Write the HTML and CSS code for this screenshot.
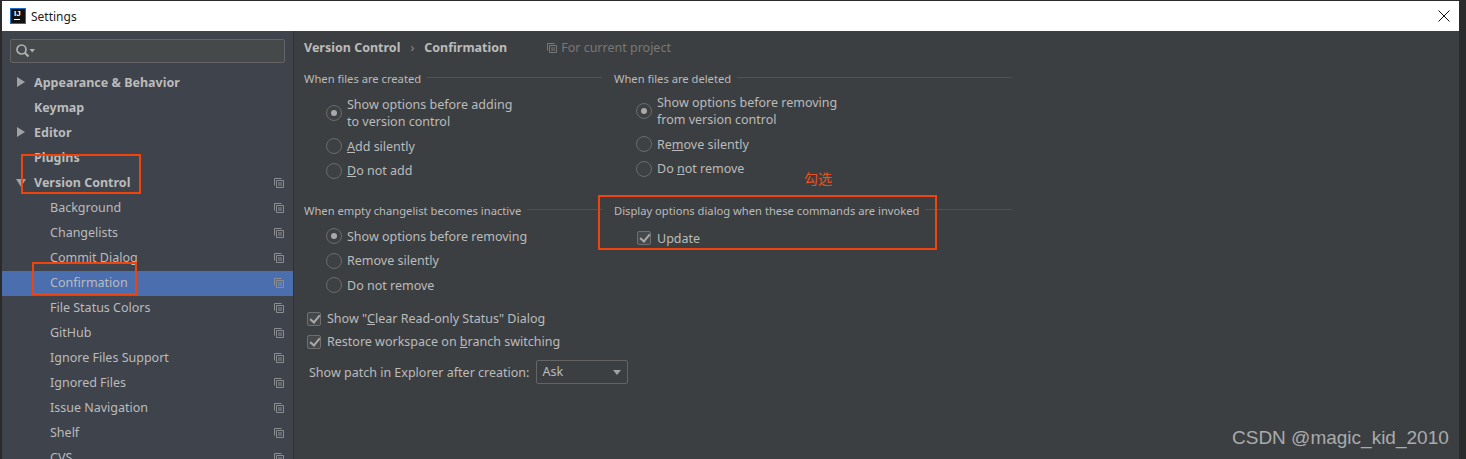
FILE: index.html
```html
<!DOCTYPE html>
<html lang="en">
<head>
    <meta charset="UTF-8">
    <meta name="viewport" content="width=device-width, initial-scale=1.0">
    <title>Settings</title>
    <link rel="stylesheet" href="styles.css">
</head>
<body>

<svg class="defs" width="0" height="0">
    <symbol id="copy" viewBox="0 0 10 10">
        <path d="M0.5 7.5V0.5H7.5M2.5 2.5H9.5V9.5H2.5ZM4 5H8M4 7H8" fill="none" stroke="currentColor"/>
    </symbol>
</svg>

<div class="window">

    <!-- Title bar -->
    <div class="titlebar">
        <div class="logo"><span>IJ</span><i></i></div>
        <span class="title">Settings</span>
        <svg class="close" width="12" height="12" viewBox="0 0 12 12">
            <path d="M0.5 0.5L11.5 11.5M11.5 0.5L0.5 11.5" stroke="#111" fill="none"/>
        </svg>
    </div>

    <div class="main">

        <!-- Left tree -->
        <div class="sidebar">
            <div class="search">
                <svg width="20" height="15" viewBox="0 0 20 15">
                    <circle cx="5.5" cy="5.5" r="4.5" fill="none" stroke="#afb1b3" stroke-width="1.7"/>
                    <path d="M8.8 8.8L12.5 12.5" stroke="#afb1b3" stroke-width="2.2"/>
                    <path d="M13.5 5H19L16.2 8.5Z" fill="#afb1b3"/>
                </svg>
            </div>
            <div class="tree">
                <div class="row top"><i class="arrow"></i>Appearance &amp; Behavior</div>
                <div class="row top">Keymap</div>
                <div class="row top"><i class="arrow"></i>Editor</div>
                <div class="row top">Plugins</div>
                <div class="row top"><i class="arrow open"></i>Version Control<svg class="copy"><use href="#copy"/></svg></div>
                <div class="row sub">Background<svg class="copy"><use href="#copy"/></svg></div>
                <div class="row sub">Changelists<svg class="copy"><use href="#copy"/></svg></div>
                <div class="row sub">Commit Dialog<svg class="copy"><use href="#copy"/></svg></div>
                <div class="row sub selected">Confirmation<svg class="copy"><use href="#copy"/></svg></div>
                <div class="row sub">File Status Colors<svg class="copy"><use href="#copy"/></svg></div>
                <div class="row sub">GitHub<svg class="copy"><use href="#copy"/></svg></div>
                <div class="row sub">Ignore Files Support<svg class="copy"><use href="#copy"/></svg></div>
                <div class="row sub">Ignored Files<svg class="copy"><use href="#copy"/></svg></div>
                <div class="row sub">Issue Navigation<svg class="copy"><use href="#copy"/></svg></div>
                <div class="row sub">Shelf<svg class="copy"><use href="#copy"/></svg></div>
                <div class="row sub">CVS<svg class="copy"><use href="#copy"/></svg></div>
            </div>
        </div>

        <!-- Settings panel -->
        <div class="panel">
            <div class="crumbs">
                <b>Version Control</b>
                <span class="sep">›</span>
                <b>Confirmation</b>
                <svg class="copy project-icon"><use href="#copy"/></svg>
                <span class="project">For current project</span>
            </div>

            <div class="groups">
                <div class="group">
                    <div class="heading"><span>When files are created</span><hr></div>
                    <div class="options first">
                        <div class="opt two-line"><i class="radio on"></i><span>Show options before adding<br>to version control</span></div>
                        <div class="opt"><i class="radio"></i><span><u>A</u>dd silently</span></div>
                        <div class="opt"><i class="radio"></i><span><u>D</u>o not add</span></div>
                    </div>
                </div>
                <div class="group">
                    <div class="heading"><span>When files are deleted</span><hr></div>
                    <div class="options first shifted">
                        <div class="opt two-line"><i class="radio on"></i><span>Show options before removing<br>from version control</span></div>
                        <div class="opt"><i class="radio"></i><span>Re<u>m</u>ove silently</span></div>
                        <div class="opt"><i class="radio"></i><span>Do <u>n</u>ot remove</span></div>
                    </div>
                </div>
                <div class="group">
                    <div class="heading"><span>When empty changelist becomes inactive</span><hr></div>
                    <div class="options">
                        <div class="opt"><i class="radio on"></i><span>Show options before removing</span></div>
                        <div class="opt"><i class="radio"></i><span>Remove silently</span></div>
                        <div class="opt"><i class="radio"></i><span>Do not remove</span></div>
                    </div>
                </div>
                <div class="group">
                    <div class="heading"><span>Display options dialog when these commands are invoked</span><hr></div>
                    <div class="options update">
                        <div class="opt"><i class="check"></i><span>Update</span></div>
                    </div>
                </div>
            </div>

            <div class="extras">
                <div class="opt"><i class="check"></i><span>Show "<u>C</u>lear Read-only Status" Dialog</span></div>
                <div class="opt"><i class="check"></i><span>Restore workspace on <u>b</u>ranch switching</span></div>
                <div class="patch">
                    <span>Show patch in Explorer after creation:</span>
                    <div class="select"><span>Ask</span><i></i></div>
                </div>
            </div>
        </div>
    </div>
</div>

<!-- Hand-drawn red annotations on top of the screenshot -->
<div class="mark mark-plugins"></div>
<div class="mark mark-confirm"></div>
<div class="mark mark-update"></div>
<div class="note">勾选</div>
<div class="watermark">CSDN @magic_kid_2010</div>

</body>
</html>
```

FILE: styles.css
```css
body {
    margin: 0;
    height: 459px;
    overflow: hidden;
    background: #2b2b2b;
    font-family: "Noto Sans", "Noto Sans CJK SC", sans-serif;
    font-size: 12.5px;
    color: #bbbbbb;
    position: relative;
}
.defs {
    position: absolute;
}
.window {
    margin: 1px 7px 0 2px;
    height: 458px;
    display: flex;
    flex-direction: column;
}

/* title bar */
.titlebar {
    height: 30px;
    background: #fff;
    display: flex;
    align-items: center;
    padding: 0 9px 0 8px;
    flex: none;
}
.logo {
    width: 16px;
    height: 16px;
    background: #111;
    border: 1px solid #1a6fc0;
    box-sizing: border-box;
    color: #fff;
    font: bold 8px/9px "Liberation Sans", sans-serif;
    padding-left: 3px;
    position: relative;
}
.logo span {
    display: block;
}
.logo i {
    display: block;
    width: 6px;
    height: 1px;
    background: #fff;
    margin-top: 1px;
}
.title {
    margin-left: 5px;
    color: #222;
    font-size: 12px;
}
.close {
    margin-left: auto;
}

.main {
    flex: 1;
    display: flex;
    min-height: 0;
}

/* left tree */
.sidebar {
    width: 291px;
    flex: none;
    background: #3e434c;
    border-right: 1px solid #323232;
    overflow: hidden;
}
.search {
    margin: 8px 8px 0 8px;
    height: 24px;
    box-sizing: border-box;
    background: #45494a;
    border: 1px solid #646464;
    border-radius: 2px;
    padding: 4px 0 0 5px;
}
.search svg {
    display: block;
}
.tree {
    margin-top: 8px;
}
.row {
    height: 25px;
    line-height: 23px;
    position: relative;
    white-space: nowrap;
}
.row.top {
    padding-left: 32px;
    font-weight: 700;
}
.row.sub {
    padding-left: 48px;
}
.row.selected {
    background: #4b6eaf;
}
.arrow {
    position: absolute;
    left: 15px;
    top: 6px;
    border-left: 8px solid #a0a2a5;
    border-top: 5px solid transparent;
    border-bottom: 5px solid transparent;
}
.arrow.open {
    left: 14px;
    top: 8px;
    border-top: 8px solid #a0a2a5;
    border-left: 5px solid transparent;
    border-right: 5px solid transparent;
    border-bottom: 0;
}
.copy {
    width: 10px;
    height: 10px;
    color: #8b8e91;
    position: absolute;
    right: 9px;
    top: 7px;
}

/* right panel */
.panel {
    flex: 1;
    background: #3c3f41;
    padding: 0 0 0 10px;
    min-width: 0;
}
.crumbs {
    height: 17px;
    margin-top: 8px;
    display: flex;
    align-items: center;
    white-space: nowrap;
}
.crumbs b {
    font-weight: 700;
}
.sep {
    margin: 0 10px;
    color: #8c8c8c;
}
.crumbs .copy {
    position: static;
    color: #787878;
    margin-left: 40px;
}
.project {
    margin-left: 4px;
    color: #787878;
}
.groups {
    display: grid;
    grid-template-columns: 310px 410px;
    grid-template-rows: 132px 102px;
    margin-top: 14px;
}
.heading {
    display: flex;
    align-items: center;
    height: 16px;
    font-size: 11.2px;
    white-space: nowrap;
}
.heading hr {
    flex: 1;
    border: 0;
    height: 1px;
    background: #515151;
    margin: 0 12px 2px 6px;
}
.options {
    margin: 6px 0 0 22px;
}
.options.first {
    margin-top: 10px;
}
.options.shifted {
    margin-top: 8px;
}
.options.update {
    margin: 8px 0 0 23px;
}
.opt {
    display: flex;
    align-items: center;
    height: 24.5px;
    white-space: nowrap;
}
.opt.two-line {
    height: 34px;
    line-height: 17px;
    margin-bottom: 4px;
}
.radio {
    width: 16px;
    height: 16px;
    box-sizing: border-box;
    border: 1px solid #6b6b6b;
    border-radius: 50%;
    background: #3e4143;
    margin-right: 5px;
    flex: none;
    position: relative;
}
.radio.on::after {
    content: "";
    position: absolute;
    left: 4px;
    top: 4px;
    width: 6px;
    height: 6px;
    border-radius: 50%;
    background: #a9a9a9;
}
.check {
    width: 14px;
    height: 14px;
    box-sizing: border-box;
    border: 1px solid #6e6e6e;
    border-radius: 2px;
    background: #46494b;
    margin-right: 6px;
    flex: none;
    position: relative;
}
.check::after {
    content: "";
    position: absolute;
    left: 4px;
    top: 0;
    width: 4px;
    height: 8px;
    border: solid #a9a9a9;
    border-width: 0 2px 2px 0;
    transform: rotate(40deg);
}
.extras {
    margin-top: 3px;
    padding-left: 3px;
}
.extras .opt {
    height: 23px;
}
.patch {
    display: flex;
    align-items: center;
    margin: 7px 0 0 2px;
    white-space: nowrap;
}
.select {
    width: 92px;
    height: 24px;
    box-sizing: border-box;
    border: 1px solid #646464;
    border-radius: 2px;
    margin-left: 7px;
    padding-left: 5px;
    line-height: 22px;
    position: relative;
}
.select i {
    position: absolute;
    right: 6px;
    top: 9px;
    border-top: 5px solid #a0a2a5;
    border-left: 4px solid transparent;
    border-right: 4px solid transparent;
}

/* annotations */
.mark {
    position: absolute;
    box-sizing: border-box;
    border: 2px solid #f0440c;
}
.mark-plugins {
    left: 21px;
    top: 154px;
    width: 120px;
    height: 40px;
}
.mark-confirm {
    left: 32px;
    top: 262px;
    width: 105px;
    height: 33px;
}
.mark-update {
    left: 598px;
    top: 195px;
    width: 339px;
    height: 55px;
}
.note {
    position: absolute;
    left: 804px;
    top: 170px;
    color: #e8501e;
    font-size: 14px;
    line-height: 18px;
}
.watermark {
    position: absolute;
    left: 1232px;
    top: 426px;
    color: #a9abac;
    font: 19px/24px "Liberation Sans", sans-serif;
    white-space: nowrap;
}
```
